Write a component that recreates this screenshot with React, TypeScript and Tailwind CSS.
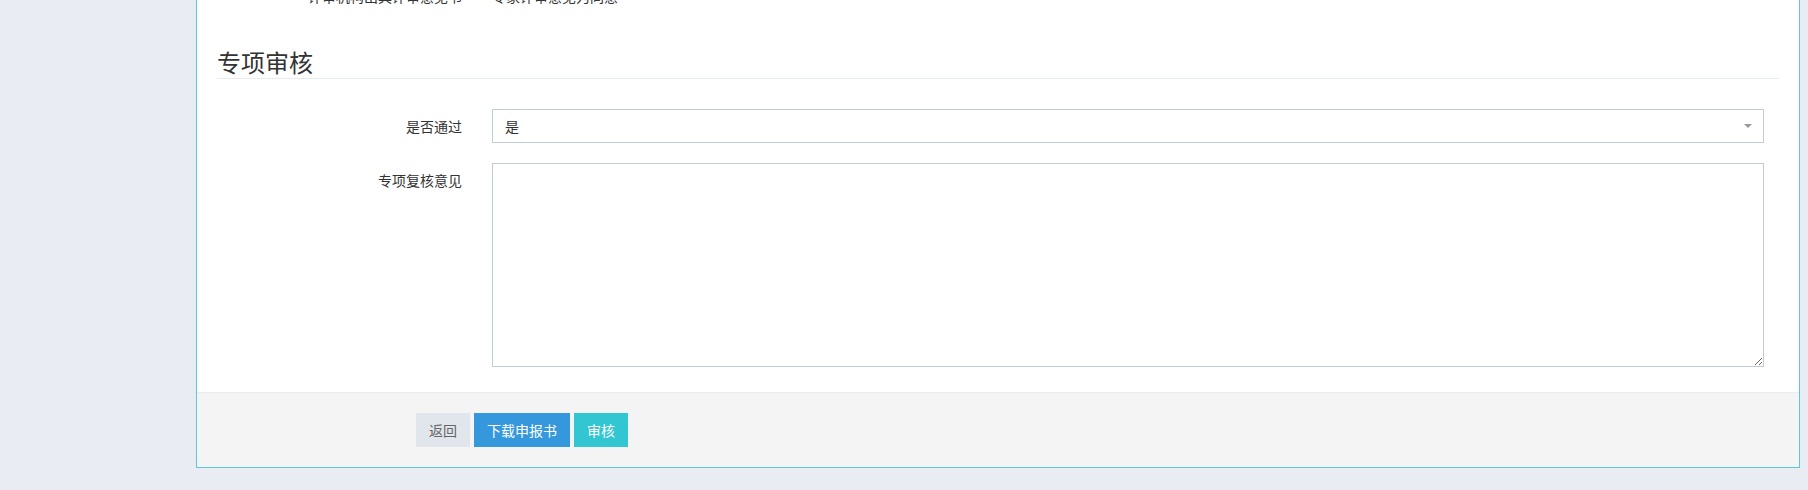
import React from "react";

const font = { fontFamily: '"Noto Sans CJK SC", "Noto Sans", sans-serif' };

const FormRow = ({
  label,
  children,
}: {
  label: string;
  children: React.ReactNode;
}) => (
  <div className="flex">
    <div className="w-[260px] shrink-0 pr-[15px] pt-[7px] text-right text-[14px] leading-[20px] text-[#333]">
      {label}
    </div>
    <div className="ml-[15px] w-[1272px]">{children}</div>
  </div>
);

const App = () => {
  return (
    <div
      className="flex h-[490px] w-[1808px] overflow-hidden bg-[#e9ecf3]"
      style={font}
    >
      <div className="w-[196px] shrink-0" />
      <div className="flex h-[468px] w-[1604px] shrink-0 flex-col border border-t-0 border-[#5bc7d8] bg-white">
        {/* body */}
        <div className="px-[20px] pb-[25px]">
          {/* previous row, cut off at the top */}
          <div className="flex h-[6px] items-end overflow-hidden">
            <div className="flex h-[20px] shrink-0 text-[14px] leading-[20px] text-[#333]">
              <div className="w-[245px] text-right">评审机构出具评审意见书</div>
              <div className="ml-[30px]">专家评审意见为同意</div>
            </div>
          </div>

          <h3 className="mt-[39px] border-b border-[#e7ecf1] text-[24px] leading-[33px] font-normal text-[#333]">
            专项审核
          </h3>

          <div className="mt-[30px] flex flex-col gap-[20px]">
            <FormRow label="是否通过">
              <div className="flex h-[34px] items-center justify-between border border-[#c2cad8] bg-white pl-[12px] pr-[11px] text-[14px] text-[#333]">
                <span>是</span>
                <svg width="8" height="4" viewBox="0 0 8 4">
                  <path d="M0 0h8L4 4z" fill="#999" />
                </svg>
              </div>
            </FormRow>
            <FormRow label="专项复核意见">
              <textarea
                className="block h-[204px] w-full border border-[#c2cad8] bg-white px-[12px] py-[6px] text-[14px] text-[#333] outline-none"
                style={font}
              />
            </FormRow>
          </div>
        </div>

        {/* footer */}
        <div className="flex-1 border-t border-[#e7ecf1] bg-[#f4f4f4] pl-[219px] pt-[20px]">
          <div className="flex gap-[4px] text-[14px] leading-[20px]">
            <button className="h-[34px] border border-[#e1e5ec] bg-[#e1e5ec] px-[12px] text-[#666]">
              返回
            </button>
            <button className="h-[34px] border border-[#3598dc] bg-[#3598dc] px-[12px] text-white">
              下载申报书
            </button>
            <button className="h-[34px] border border-[#32c5d2] bg-[#32c5d2] px-[12px] text-white">
              审核
            </button>
          </div>
        </div>
      </div>
    </div>
  );
};

export default App;
